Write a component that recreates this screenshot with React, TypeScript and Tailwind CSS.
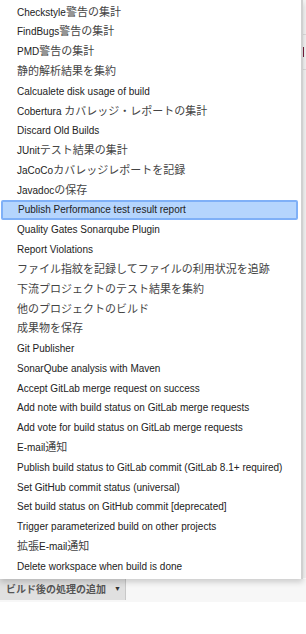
const items = [
  "Checkstyle警告の集計",
  "FindBugs警告の集計",
  "PMD警告の集計",
  "静的解析結果を集約",
  "Calcualete disk usage of build",
  "Cobertura カバレッジ・レポートの集計",
  "Discard Old Builds",
  "JUnitテスト結果の集計",
  "JaCoCoカバレッジレポートを記録",
  "Javadocの保存",
  "Publish Performance test result report",
  "Quality Gates Sonarqube Plugin",
  "Report Violations",
  "ファイル指紋を記録してファイルの利用状況を追跡",
  "下流プロジェクトのテスト結果を集約",
  "他のプロジェクトのビルド",
  "成果物を保存",
  "Git Publisher",
  "SonarQube analysis with Maven",
  "Accept GitLab merge request on success",
  "Add note with build status on GitLab merge requests",
  "Add vote for build status on GitLab merge requests",
  "E-mail通知",
  "Publish build status to GitLab commit (GitLab 8.1+ required)",
  "Set GitHub commit status (universal)",
  "Set build status on GitHub commit [deprecated]",
  "Trigger parameterized build on other projects",
  "拡張E-mail通知",
  "Delete workspace when build is done",
];

const SELECTED = 10;

// japanese runs render a bit larger than the latin text in the original
function Label({ text }: { text: string }) {
  const parts = text.split(/([\u3000-\u30ff\u4e00-\u9fff\uff00-\uffef]+)/);
  return (
    <span>
      {parts.map((p, i) =>
        i % 2 === 1 ? (
          <span key={i} className="text-[11px] text-[#444]">
            {p}
          </span>
        ) : (
          p
        )
      )}
    </span>
  );
}

export default function App() {
  return (
    <div
      className="w-[306px] h-[634px] bg-white overflow-hidden relative"
      style={{ fontFamily: '"Liberation Sans", Arial, "Noto Sans CJK JP", sans-serif' }}
    >
      {/* page behind the menu */}
      <div className="absolute right-0 top-0 w-[4px] h-[578px] bg-[#f4f4f4]">
        <div className="mt-[34px] h-px bg-[#ddd]" />
        <div className="mt-[12px] ml-[1px] h-[10px] w-[1px] bg-[#7a1f3d]" />
        <div className="mt-[12px] h-px bg-[#ddd]" />
      </div>

      <div className="relative w-[303px] bg-white border-r-2 border-[#d0d0d0] shadow-[0_3px_6px_rgba(0,0,0,0.18)] pt-[2px] pb-[3px]">
        {items.map((label, i) => (
          <div
            key={label}
            className={
              i === SELECTED
                ? "mx-[1px] mr-[3px] h-[19.8px] flex items-center pl-[15px] text-[10px] text-[#222] bg-[#b5d5fd] border-2 border-[#7fb0f7] rounded-[2px] whitespace-nowrap"
                : "h-[19.8px] flex items-center pl-[17px] text-[10px] text-[#222] whitespace-nowrap overflow-hidden"
            }
          >
            <Label text={label} />
          </div>
        ))}
      </div>

      <div className="h-[23px] bg-[#f7f7f7] flex">
        <div className="w-[126px] h-[21px] bg-[#e0e0e0] border-r border-[#c8c8c8] flex items-center pl-[6px] gap-[8px] whitespace-nowrap text-[10px] font-bold text-[#555]">
          ビルド後の処理の追加
          <span className="text-[7px] text-[#333]">▼</span>
        </div>
      </div>
    </div>
  );
}
